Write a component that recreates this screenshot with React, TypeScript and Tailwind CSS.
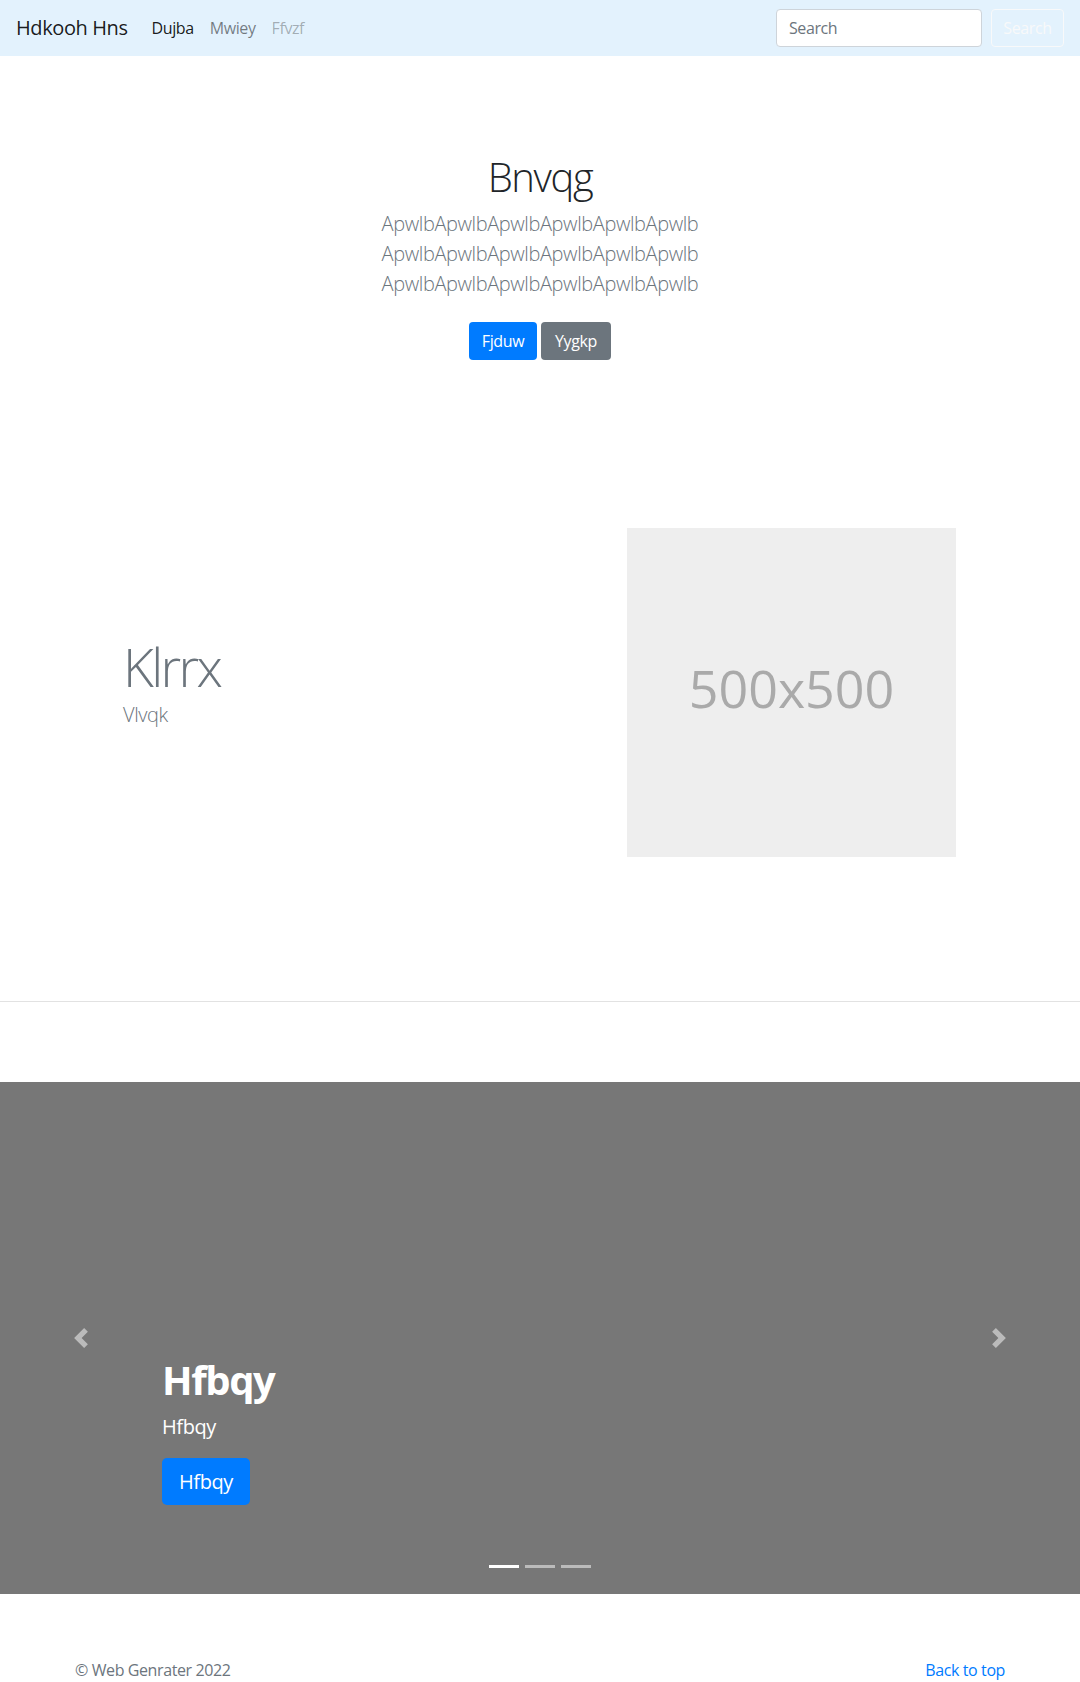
import React from 'react'

const font = { fontFamily: '"Open Sans", "Liberation Sans", sans-serif' }

const Navbar = () => {
  return (
    <nav className='flex items-center h-[56px] px-4 bg-[#e3f2fd]'>
      <a className='text-[20px] text-black/90 mr-4'>Hdkooh Hns</a>
      <ul className='flex'>
        <li className='px-2 text-black/90'>Dujba</li>
        <li className='px-2 text-black/50'>Mwiey</li>
        <li className='px-2 text-black/30'>Ffvzf</li>
      </ul>
      <form className='flex ml-auto'>
        <input
          className='w-[206px] h-[38px] mr-[9px] px-3 bg-white border border-[#ced4da] rounded-[4px] text-[#495057] placeholder:text-[#6c757d] outline-none'
          placeholder='Search'
        />
        <button type='button' className='w-[73px] h-[38px] border border-[#f8f9fa] rounded-[4px] text-[#f8f9fa]'>Search</button>
      </form>
    </nav>
  )
}

const Hero = () => {
  return (
    <section className='flex flex-col items-center text-center pt-[97px]'>
      <h1 className='text-[40px] leading-[48px] font-light tracking-[-0.035em] text-[#212529] mb-2'>Bnvqg</h1>
      <p className='text-[20px] leading-[30px] font-light text-[#6c757d]'>
        ApwlbApwlbApwlbApwlbApwlbApwlb<br />ApwlbApwlbApwlbApwlbApwlbApwlb<br />ApwlbApwlbApwlbApwlbApwlbApwlb
      </p>
      <div className='flex gap-1 mt-[23px]'>
        <button className='w-[68px] h-[38px] rounded-[4px] bg-[#007bff] text-white'>Fjduw</button>
        <button className='w-[70px] h-[38px] rounded-[4px] bg-[#6c757d] text-white'>Yygkp</button>
      </div>
    </section>
  )
}

const Feature = () => {
  return (
    <section className='flex mt-[168px]'>
      <div className='w-[627px] pl-[123px] pt-[105px]'>
        <h2 className='text-[53px] leading-[67px] font-light tracking-[-0.05em] text-[#6c757d]'>Klrrx</h2>
        <p className='text-[20px] leading-[30px] font-light text-[#6c757d]'>Vlvqk</p>
      </div>
      <div className='flex items-center justify-center w-[329px] h-[329px] bg-[#eee]'>
        <span className='text-[52px] tracking-normal text-[#aaa] mb-[10px]'>500x500</span>
      </div>
    </section>
  )
}

const Arrow = ({ flip }: { flip?: boolean }) => (
  <svg width='20' height='20' viewBox='0 0 8 8' fill='#fff' className={flip ? 'rotate-180' : ''}>
    <path d='M5.25 0l-4 4 4 4 1.5-1.5L4.25 4l2.5-2.5L5.25 0z' />
  </svg>
)

const Carousel = () => {
  return (
    <section className='relative h-[512px] bg-[#777] mt-[80px]'>
      <div className='absolute left-0 top-0 bottom-0 w-[15%] flex items-center justify-center opacity-50'>
        <Arrow />
      </div>
      <div className='absolute right-0 top-0 bottom-0 w-[15%] flex items-center justify-center opacity-50'>
        <Arrow flip />
      </div>
      <div className='absolute left-[162px] bottom-[89px] text-white'>
        <h1 className='text-[40px] leading-[48px] font-bold tracking-[-0.035em] mb-2'>Hfbqy</h1>
        <p className='text-[20px] leading-[30px] mb-4'>Hfbqy</p>
        <button className='w-[88px] h-[47px] rounded-[5px] bg-[#007bff] text-[20px] text-white'>Hfbqy</button>
      </div>
      <ol className='absolute bottom-[26px] left-0 right-0 flex justify-center gap-[6px]'>
        <li className='w-[30px] h-[3px] bg-white'></li>
        <li className='w-[30px] h-[3px] bg-white/50'></li>
        <li className='w-[30px] h-[3px] bg-white/50'></li>
      </ol>
    </section>
  )
}

export default function App() {
  return (
    <div className='bg-white text-base tracking-[-0.025em] text-[#212529] min-h-[1682px]' style={font}>
      <Navbar />
      <Hero />
      <Feature />
      <hr className='mt-[144px] border-0 border-t border-[#e2e2e2]' />
      <Carousel />
      <footer className='flex justify-between px-[75px] pt-[64px] pb-12 text-[#6c757d]'>
        <p>© Web Genrater 2022</p>
        <a className='text-[#007bff]'>Back to top</a>
      </footer>
    </div>
  )
}
